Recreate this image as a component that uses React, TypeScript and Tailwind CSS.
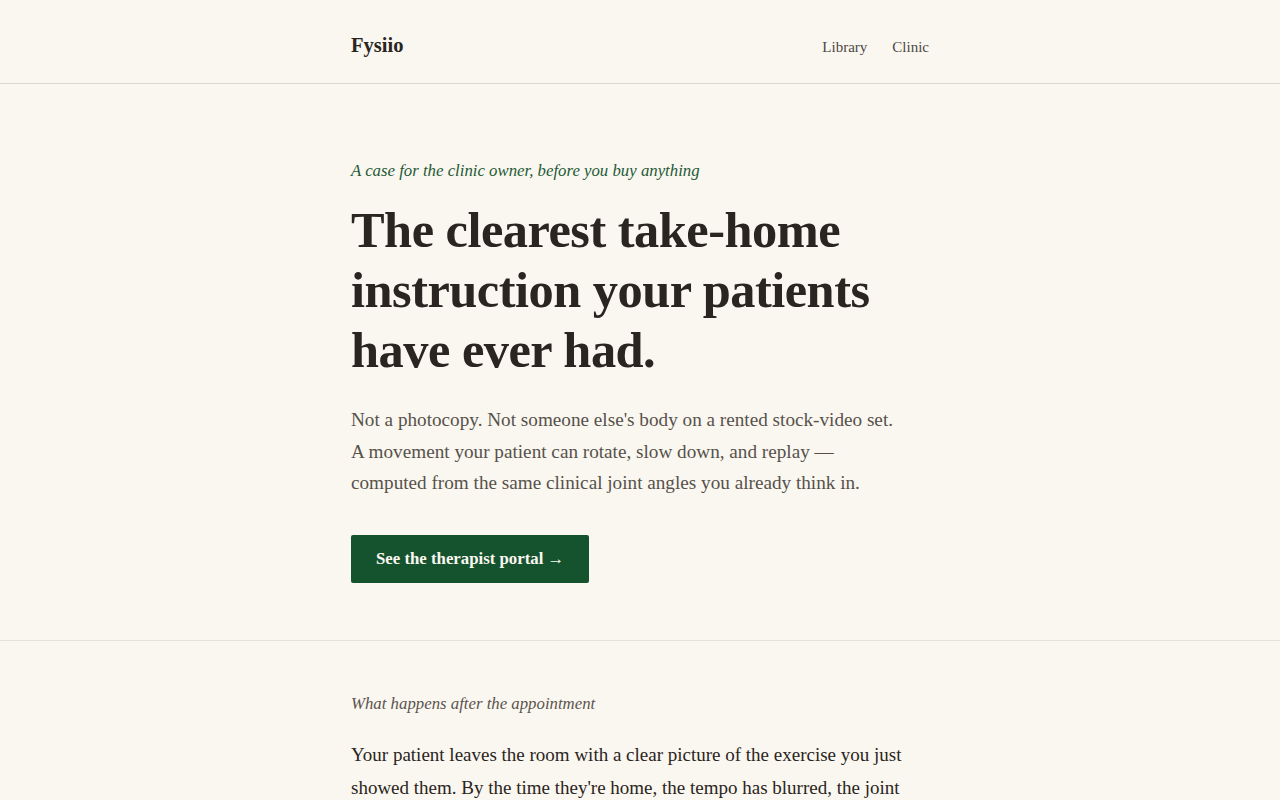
export default function App() {
  return (
    <div className="min-h-screen bg-[#faf7f1] text-[#2a2520] font-['Liberation_Serif','Times_New_Roman',serif]">
      <header className="border-b border-[#dcd8cf]">
        <div className="mx-auto flex h-[83px] max-w-[578px] items-center justify-between pt-[8px]">
          <a className="text-[20.5px] font-bold text-[#2a2520]">Fysiio</a>
          <nav className="flex gap-[25px] pt-[4px] text-[15px] text-[#4d4842]">
            <a>Library</a>
            <a>Clinic</a>
          </nav>
        </div>
      </header>

      <section className="border-b border-[#e6e2da]">
        <div className="mx-auto max-w-[578px] pb-[57px] pt-[75px]">
          <p className="text-[16.8px] italic leading-[24px] text-[#1f5a35]">
            A case for the clinic owner, before you buy anything
          </p>
          <h1 className="mt-[17px] text-[50.4px] font-bold leading-[60px] tracking-[-0.5px] text-[#2a2520]">
            The clearest take-home instruction your patients have ever had.
          </h1>
          <p className="mt-[24px] max-w-[552px] text-[19.2px] leading-[31.6px] text-[#57514a]">
            Not a photocopy. Not someone else's body on a rented stock-video set. A movement your patient can rotate, slow down, and replay — computed from the same clinical joint angles you already think in.
          </p>
          <a className="mt-[36px] inline-flex h-[48px] items-center rounded-[2px] bg-[#15532e] px-[25px] text-[16.8px] font-bold text-[#fbf8f1]">
            See the therapist portal →
          </a>
        </div>
      </section>

      <section>
        <div className="mx-auto max-w-[578px] pb-[60px] pt-[51px]">
          <p className="text-[16.8px] italic leading-[24px] text-[#5a544d]">What happens after the appointment</p>
          <p className="mt-[22px] max-w-[560px] text-[19px] leading-[33px] text-[#2a2520]">
            Your patient leaves the room with a clear picture of the exercise you just showed them. By the time they're home, the tempo has blurred, the joint angle has drifted, and the sheet of paper in their bag shows a stick figure that doesn't look like them.
          </p>
        </div>
      </section>
    </div>
  );
}
